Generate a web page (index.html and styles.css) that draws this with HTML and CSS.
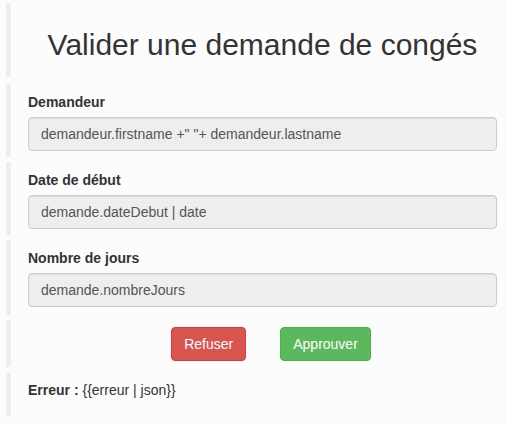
FILE: index.html
```html
<!DOCTYPE html>
<html lang="fr">
<head>
<meta charset="utf-8">
<title>Valider une demande de congés</title>
<link rel="stylesheet" href="styles.css">
</head>
<body>
<main class="page">
  <section class="block block-title">
    <h1 class="title">Valider une demande de congés</h1>
  </section>
  <section class="block">
    <label class="label">Demandeur</label>
    <div class="field">demandeur.firstname +" "+ demandeur.lastname</div>
  </section>
  <section class="block">
    <label class="label">Date de début</label>
    <div class="field">demande.dateDebut | date</div>
  </section>
  <section class="block block-last-field">
    <label class="label">Nombre de jours</label>
    <div class="field">demande.nombreJours</div>
  </section>
  <section class="block block-actions">
    <div class="actions">
      <button class="btn btn-danger">Refuser</button>
      <button class="btn btn-success">Approuver</button>
    </div>
  </section>
  <section class="block block-error">
    <p class="error"><strong>Erreur :</strong> {{erreur | json}}</p>
  </section>
</main>
</body>
</html>
```

FILE: styles.css
```css
html, body {
  margin: 0;
  padding: 0;
  background: #fcfcfc;
}
body {
  font-family: "Liberation Sans", Arial, sans-serif;
  font-size: 14px;
  line-height: 20px;
  color: #333;
}
.page {
  padding: 3px 9px 0 6px;
  display: flex;
  flex-direction: column;
}
.block {
  border-left: 5px solid #eee;
  padding: 8px 0 6px 17px;
  margin-bottom: 5px;
}
.block-title {
  padding: 25px 0 16px 17px;
  margin-bottom: 7px;
}
.block-last-field {
  padding-bottom: 8px;
}
.title {
  margin: 0;
  font-size: 30px;
  line-height: 33px;
  font-weight: 400;
  text-align: center;
  color: #333;
}
.label {
  display: block;
  font-weight: 700;
  margin-bottom: 5px;
}
.field {
  box-sizing: border-box;
  height: 34px;
  padding: 6px 12px;
  background: #eee;
  border: 1px solid #ccc;
  border-radius: 4px;
  color: #555;
  box-shadow: inset 0 1px 1px rgba(0,0,0,.075);
}
.block-actions {
  padding: 7px 0 6px 17px;
  margin-bottom: 6px;
}
.actions {
  display: flex;
  justify-content: center;
  gap: 34px;
  padding-left: 17px;
}
.btn {
  box-sizing: border-box;
  height: 34px;
  padding: 6px 12px;
  font-family: "Liberation Sans", Arial, sans-serif;
  font-size: 14px;
  line-height: 20px;
  color: #fff;
  border: 1px solid transparent;
  border-radius: 4px;
  cursor: pointer;
}
.btn-danger {
  background: #d9534f;
  border-color: #d43f3a;
}
.btn-success {
  background: #5cb85c;
  border-color: #4cae4c;
}
.block-error {
  padding: 7px 0 16px 17px;
}
.error {
  margin: 0;
}
```
